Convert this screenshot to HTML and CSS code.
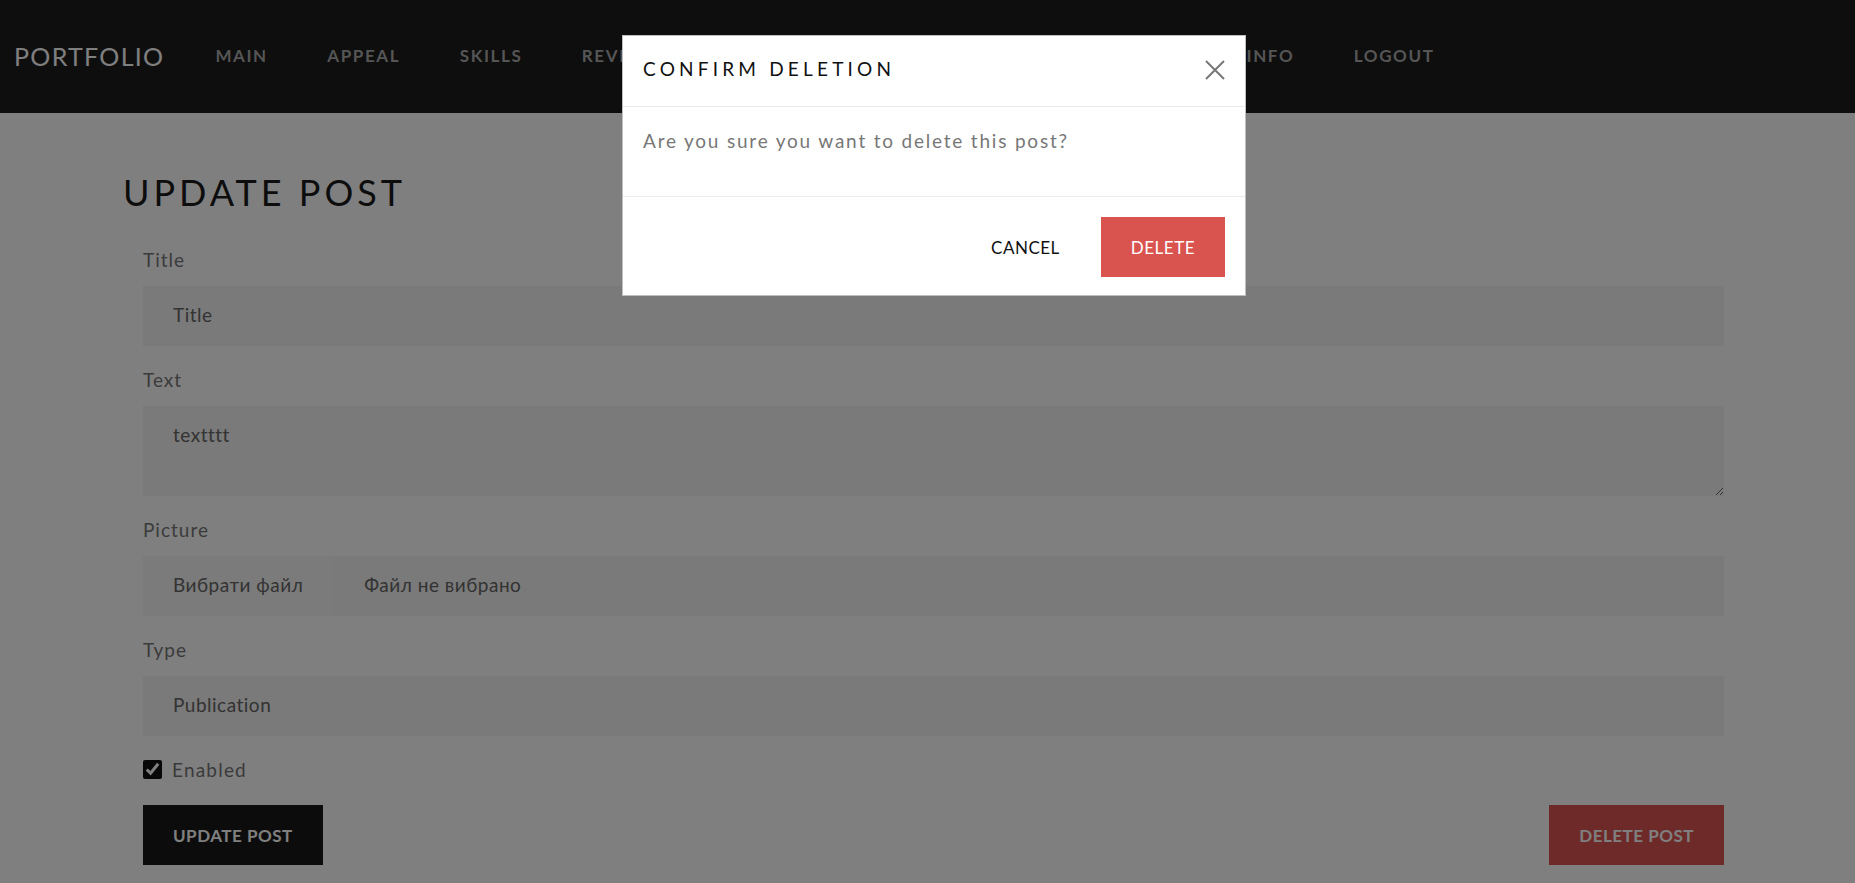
FILE: index.html
```html
<!DOCTYPE html>
<html lang="en">
<head>
<meta charset="utf-8">
<title>Update post</title>
<link rel="stylesheet" href="styles.css">
</head>
<body>
<header class="navbar">
  <a class="brand" href="#">PORTFOLIO</a>
  <nav class="nav-links">
    <a href="#">MAIN</a>
    <a href="#">APPEAL</a>
    <a href="#">SKILLS</a>
    <a href="#">REVIEWS</a>
    <a href="#">PROJECT</a>
    <a href="#">POSTS</a>
    <a href="#">MESSAGES</a>
    <a href="#">CONTACT INFO</a>
    <a href="#">LOGOUT</a>
  </nav>
</header>

<main class="page">
  <h1 class="page-title">UPDATE POST</h1>
  <form class="post-form">
    <div class="field">
      <label class="field-label" for="title">Title</label>
      <input class="control" id="title" type="text" value="Title">
    </div>
    <div class="field">
      <label class="field-label" for="text">Text</label>
      <textarea class="control control-area" id="text">textttt</textarea>
    </div>
    <div class="field">
      <span class="field-label">Picture</span>
      <div class="control file-control">
        <span class="file-button">Вибрати файл</span>
        <span class="file-name">Файл не вибрано</span>
      </div>
    </div>
    <div class="field">
      <label class="field-label" for="type">Type</label>
      <select class="control control-select" id="type">
        <option>Publication</option>
      </select>
    </div>
    <div class="check-row">
      <input class="check" id="enabled" type="checkbox" checked>
      <label class="check-label" for="enabled">Enabled</label>
    </div>
    <div class="actions">
      <button type="button" class="btn btn-dark">UPDATE POST</button>
      <button type="button" class="btn btn-red">DELETE POST</button>
    </div>
  </form>
</main>

<div class="backdrop"></div>

<div class="modal" role="dialog" aria-labelledby="modal-title">
  <div class="modal-header">
    <h2 class="modal-title" id="modal-title">CONFIRM DELETION</h2>
    <button type="button" class="modal-close" aria-label="Close">
      <svg width="20" height="20" viewBox="0 0 20 20"><path d="M1 1 L19 19 M19 1 L1 19" stroke="#777" stroke-width="2" fill="none"/></svg>
    </button>
  </div>
  <div class="modal-body">Are you sure you want to delete this post?</div>
  <div class="modal-footer">
    <button type="button" class="btn btn-plain">CANCEL</button>
    <button type="button" class="btn btn-danger">DELETE</button>
  </div>
</div>
</body>
</html>
```

FILE: styles.css
```css
* { box-sizing: border-box; }

html, body {
  margin: 0;
  padding: 0;
  background: #ffffff;
  font-family: "Lato", "Open Sans", sans-serif;
  color: #777;
}

.navbar {
  height: 113px;
  background: #1c1c1c;
  display: flex;
  align-items: center;
  padding-left: 14px;
  padding-bottom: 2px;
}

.brand {
  color: #ffffff;
  text-decoration: none;
  font-size: 25px;
  font-weight: 400;
  letter-spacing: 1.3px;
  margin-right: 51px;
}

.nav-links {
  display: flex;
  gap: 59.5px;
}

.nav-links a {
  color: #aaaaaa;
  text-decoration: none;
  font-size: 17px;
  font-weight: 700;
  letter-spacing: 1.6px;
}

.page {
  padding: 58px 131px 0 123px;
}

.page-title {
  margin: 0 0 32px 0;
  font-size: 36px;
  line-height: 43px;
  font-weight: 400;
  letter-spacing: 4px;
  color: #1a1a1a;
}

.post-form {
  padding: 0 0 0 20px;
}

.field {
  margin-bottom: 20px;
}

.field-label {
  display: block;
  font-size: 19px;
  line-height: 27px;
  letter-spacing: 1px;
  color: #777;
  margin-bottom: 13px;
}

.control {
  display: block;
  width: 100%;
  height: 60px;
  border: none;
  outline: none;
  background: #f4f4f4;
  padding: 0 30px 4px 30px;
  font-family: inherit;
  font-size: 19px;
  letter-spacing: 0.5px;
  color: #666;
  border-radius: 0;
}

.control-area {
  height: 90px;
  padding-top: 15px;
  padding-bottom: 0;
  resize: vertical;
  line-height: 27px;
}

.control-select {
  appearance: none;
  -webkit-appearance: none;
}

.file-control {
  display: flex;
  align-items: center;
  padding: 0;
}

.file-button {
  display: flex;
  align-items: center;
  height: 100%;
  padding: 0 30px 4px 30px;
  background: #f6f6f6;
  color: #666;
}

.file-name {
  margin-left: 31px;
  padding-bottom: 4px;
  color: #666;
}

.check-row {
  display: flex;
  align-items: center;
  height: 30px;
  margin-top: -2px;
  margin-bottom: 21px;
}

.check {
  width: 19px;
  height: 19px;
  margin: 0 10px 0 0;
  accent-color: #111;
}

.check-label {
  font-size: 19px;
  letter-spacing: 1.2px;
  color: #777;
}

.actions {
  display: flex;
  justify-content: space-between;
}

.btn {
  height: 60px;
  padding: 0 30px;
  border: none;
  border-radius: 0;
  font-family: inherit;
  font-size: 17px;
  letter-spacing: 0.5px;
  font-weight: 700;
  cursor: pointer;
}

.btn-dark {
  background: #181818;
  color: #ffffff;
}

.btn-red {
  background: #dc5450;
  color: #ffffff;
}

.backdrop {
  position: fixed;
  inset: 0;
  background: rgba(0, 0, 0, 0.5);
  z-index: 10;
}

.modal {
  position: fixed;
  top: 35px;
  left: 622px;
  width: 624px;
  background: #ffffff;
  border: 1px solid rgba(0, 0, 0, 0.25);
  z-index: 20;
}

.modal-header {
  height: 71px;
  display: flex;
  align-items: center;
  justify-content: space-between;
  padding: 0 20px 5px 20px;
  border-bottom: 1px solid #e9ecef;
}

.modal-title {
  margin: 0;
  font-size: 19px;
  font-weight: 400;
  letter-spacing: 4.2px;
  color: #111;
}

.modal-close {
  background: none;
  border: none;
  padding: 0;
  margin-top: 3px;
  width: 20px;
  height: 20px;
  display: flex;
  cursor: pointer;
}

.modal-body {
  padding: 20px 20px 42px 20px;
  font-size: 19px;
  line-height: 27px;
  letter-spacing: 1.8px;
  color: #777;
}

.modal-footer {
  display: flex;
  justify-content: flex-end;
  gap: 11px;
  padding: 20px 20px 18px 20px;
  border-top: 1px solid #e9ecef;
}

.btn-plain {
  background: transparent;
  color: #111;
  font-weight: 400;
}

.btn-danger {
  background: #d9534f;
  color: #ffffff;
  padding: 0 30px;
  font-weight: 400;
}
```
